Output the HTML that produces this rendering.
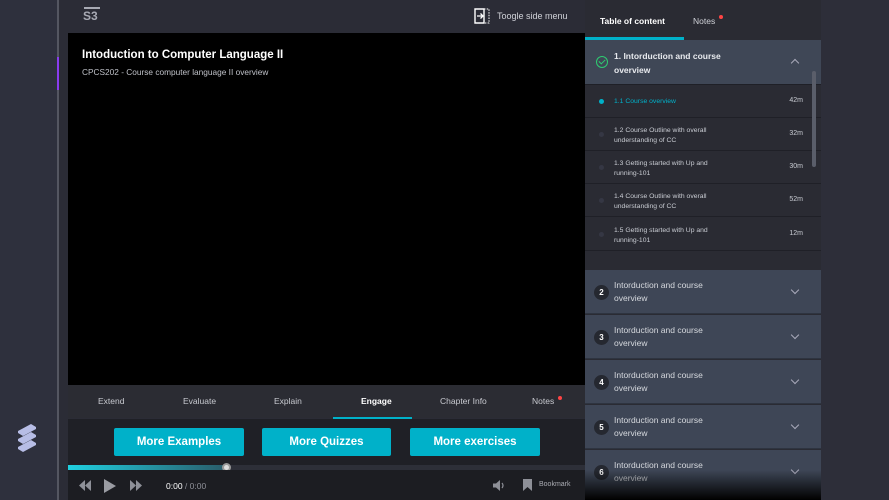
<!DOCTYPE html>
<html><head><style>
*{margin:0;padding:0;box-sizing:border-box}
body{width:889px;height:500px;overflow:hidden;background:#2b2c36;font-family:"Liberation Sans",sans-serif;position:relative;color:#fff}
.a{position:absolute}
.sub{position:absolute;left:585px;width:236px;height:33px;border-bottom:1px solid #1f2027;background:#2a2b33;font-size:6.8px;color:#c9ccd3}
.sub .t{position:absolute;left:29px;top:8px;line-height:9.5px}
.sub .d{position:absolute;right:18px;top:12px;font-size:7px}
.sub .dot{position:absolute;left:14px;top:14px;width:5px;height:5px;border-radius:50%;background:#353744}
.sec{position:absolute;left:585px;width:236px;height:44px;background:#3e4656;border-bottom:1px solid #2e3440;font-size:8.5px;color:#d6d9de}
.sec .t{position:absolute;left:29px;top:9px;line-height:13px}
.sec .n{position:absolute;left:9px;top:15px;width:15px;height:15px;border-radius:50%;background:#252830;font-size:8px;font-weight:bold;text-align:center;line-height:15px;color:#fff}
.chev{position:absolute;right:23px;top:17px;width:6px;height:6px;border-right:1px solid #aab;border-bottom:1px solid #aab;transform:rotate(45deg)}
.btn{position:absolute;top:428px;height:28px;background:#00b1c9;border-radius:2px;font-size:11.5px;font-weight:bold;text-align:center;line-height:29px}
.tab{position:absolute;top:396px;font-size:8.5px;color:#c8cad0}
</style></head><body>
<div class="a" style="left:0;top:0;width:57px;height:500px;background:#2e303d"></div>
<div class="a" style="left:57px;top:0;width:2px;height:500px;background:#545661"></div>
<div class="a" style="left:57px;top:57px;width:2px;height:33px;background:#8a3cf0"></div>
<svg class="a" style="left:16px;top:423px" width="26" height="32" viewBox="0 0 26 32"><g fill="#b7bde6"><path d="M2 8 L15 1 L20 4 L20 6 L7 13 L2 10Z"/><path d="M2 16 L15 9 L20 12 L20 14 L7 21 L2 18Z"/><path d="M2 24 L15 17 L20 20 L20 22 L7 29 L2 26Z"/></g></svg>
<div class="a" style="left:84px;top:7px;width:16px;height:1.5px;background:#a8aab4"></div>
<div class="a" style="left:83px;top:9px;font-size:12px;font-weight:bold;color:#a8aab4">S3</div>
<svg class="a" style="left:474px;top:8px" width="16" height="16" viewBox="0 0 16 16"><path d="M1 1H10V15H1Z" fill="none" stroke="#fff" stroke-width="1.4"/><path d="M10 1H15V15H10" fill="none" stroke="#fff" stroke-dasharray="1.5 1.2"/><path d="M3 8H9M6.5 5.5L9 8L6.5 10.5" fill="none" stroke="#fff" stroke-width="1.3"/></svg>
<div class="a" style="left:497px;top:11px;font-size:9px;color:#d0d2d8">Toogle side menu</div>
<div class="a" style="left:68px;top:33px;width:517px;height:352px;background:#000"></div>
<div class="a" style="left:82px;top:49px;font-size:11.5px;font-weight:bold">Intoduction to Computer Language II</div>
<div class="a" style="left:82px;top:67px;font-size:8.3px;color:#bfc1c8">CPCS202 - Course computer language II overview</div>
<div class="a" style="left:68px;top:385px;width:517px;height:33px;background:#2b2c33"></div>
<div class="tab" style="left:98px">Extend</div>
<div class="tab" style="left:183px">Evaluate</div>
<div class="tab" style="left:274px">Explain</div>
<div class="tab" style="left:361px;color:#fff;font-weight:bold">Engage</div>
<div class="tab" style="left:440px">Chapter Info</div>
<div class="tab" style="left:532px">Notes</div>
<div class="a" style="left:558px;top:396px;width:4px;height:4px;border-radius:50%;background:#ff4444"></div>
<div class="a" style="left:333px;top:417px;width:79px;height:2px;background:#00b1c9"></div>
<div class="a" style="left:68px;top:419px;width:517px;height:46px;background:#1f2026"></div>
<div class="btn" style="left:114px;width:130px">More Examples</div>
<div class="btn" style="left:262px;width:129px">More Quizzes</div>
<div class="btn" style="left:410px;width:130px">More exercises</div>
<div class="a" style="left:68px;top:465px;width:517px;height:5px;background:#2d2f38"></div>
<div class="a" style="left:68px;top:465px;width:160px;height:5px;background:linear-gradient(90deg,#1fd0e0,#2a5a68)"></div>
<div class="a" style="left:222px;top:463px;width:9px;height:9px;border-radius:50%;background:#ddd;border:2px solid #999"></div>
<div class="a" style="left:68px;top:470px;width:517px;height:30px;background:#1c1d22"></div>
<svg class="a" style="left:78px;top:480px" width="14" height="11"><path d="M7 0V11L1 5.5ZM13 0V11L7 5.5Z" fill="#8e9098"/></svg>
<svg class="a" style="left:104px;top:479px" width="12" height="14"><path d="M0 0L12 7L0 14Z" fill="#9a9ca3"/></svg>
<svg class="a" style="left:129px;top:480px" width="14" height="11"><path d="M1 0V11L7 5.5ZM7 0V11L13 5.5Z" fill="#8e9098"/></svg>
<div class="a" style="left:166px;top:481px;font-size:8.5px;color:#fff">0:00 <span style="color:#8e9098">/ 0:00</span></div>
<svg class="a" style="left:493px;top:480px" width="12" height="11"><path d="M0 3.5H3L7 0V11L3 7.5H0Z" fill="#8e9098"/><path d="M9 3Q11 5.5 9 8" fill="none" stroke="#8e9098" stroke-width="1.2"/></svg>
<svg class="a" style="left:523px;top:479px" width="9" height="12"><path d="M0 0H9V12L4.5 8L0 12Z" fill="#8e9098"/></svg>
<div class="a" style="left:539px;top:481px;font-size:7px;color:#aaacb3">Bookmark</div>
<div class="a" style="left:585px;top:0;width:236px;height:500px;background:#2a2b33"></div>
<div class="a" style="left:821px;top:0;width:68px;height:500px;background:#2d2e39"></div>
<div class="a" style="left:600px;top:16px;font-size:8.5px;font-weight:bold">Table of content</div>
<div class="a" style="left:693px;top:16px;font-size:8.5px;color:#d0d2d8">Notes</div>
<div class="a" style="left:719px;top:15px;width:4px;height:4px;border-radius:50%;background:#ff4444"></div>
<div class="a" style="left:585px;top:37px;width:99px;height:3px;background:#00b1c9"></div>
<div class="a" style="left:585px;top:40px;width:236px;height:45px;background:#3f4756;border-bottom:1px solid #1f2027"></div>
<div class="a" style="left:596px;top:56px;width:12px;height:12px;border-radius:50%;border:1.5px solid #2ecc71"></div>
<div class="a" style="left:600px;top:58px;width:4px;height:6px;border-right:1.5px solid #2ecc71;border-bottom:1.5px solid #2ecc71;transform:rotate(45deg)"></div>
<div class="a" style="left:614px;top:49px;font-size:8.5px;font-weight:bold;line-height:14px;color:#e8eaee">1. Intorduction and course<br>overview</div>
<div class="a" style="left:792px;top:60px;width:6px;height:6px;border-left:1px solid #aab;border-top:1px solid #aab;transform:rotate(45deg)"></div>
<div class="sub" style="top:85px"><div class="dot" style="background:#00b1c9"></div><div class="t" style="top:12px;color:#00b1c9">1.1 Course overview</div><div class="d">42m</div></div>
<div class="sub" style="top:118px"><div class="dot"></div><div class="t">1.2 Course Outline with overall<br>understanding of CC</div><div class="d">32m</div></div>
<div class="sub" style="top:151px"><div class="dot"></div><div class="t">1.3 Getting started with Up and<br>running-101</div><div class="d">30m</div></div>
<div class="sub" style="top:184px"><div class="dot"></div><div class="t">1.4 Course Outline with overall<br>understanding of CC</div><div class="d">52m</div></div>
<div class="sub" style="top:218px"><div class="dot"></div><div class="t">1.5 Getting started with Up and<br>running-101</div><div class="d">12m</div></div>
<div class="a" style="left:812px;top:71px;width:4px;height:96px;border-radius:2px;background:#5a5e6a"></div>
<div class="sec" style="top:270px"><div class="n">2</div><div class="t">Intorduction and course<br>overview</div><div class="chev"></div></div>
<div class="sec" style="top:315px"><div class="n">3</div><div class="t">Intorduction and course<br>overview</div><div class="chev"></div></div>
<div class="sec" style="top:360px"><div class="n">4</div><div class="t">Intorduction and course<br>overview</div><div class="chev"></div></div>
<div class="sec" style="top:405px"><div class="n">5</div><div class="t">Intorduction and course<br>overview</div><div class="chev"></div></div>
<div class="sec" style="top:450px;height:50px"><div class="n">6</div><div class="t">Intorduction and course<br>overview</div><div class="chev"></div></div>
<div class="a" style="left:585px;top:470px;width:236px;height:30px;background:linear-gradient(rgba(0,0,0,0),#000)"></div>
</body></html>
